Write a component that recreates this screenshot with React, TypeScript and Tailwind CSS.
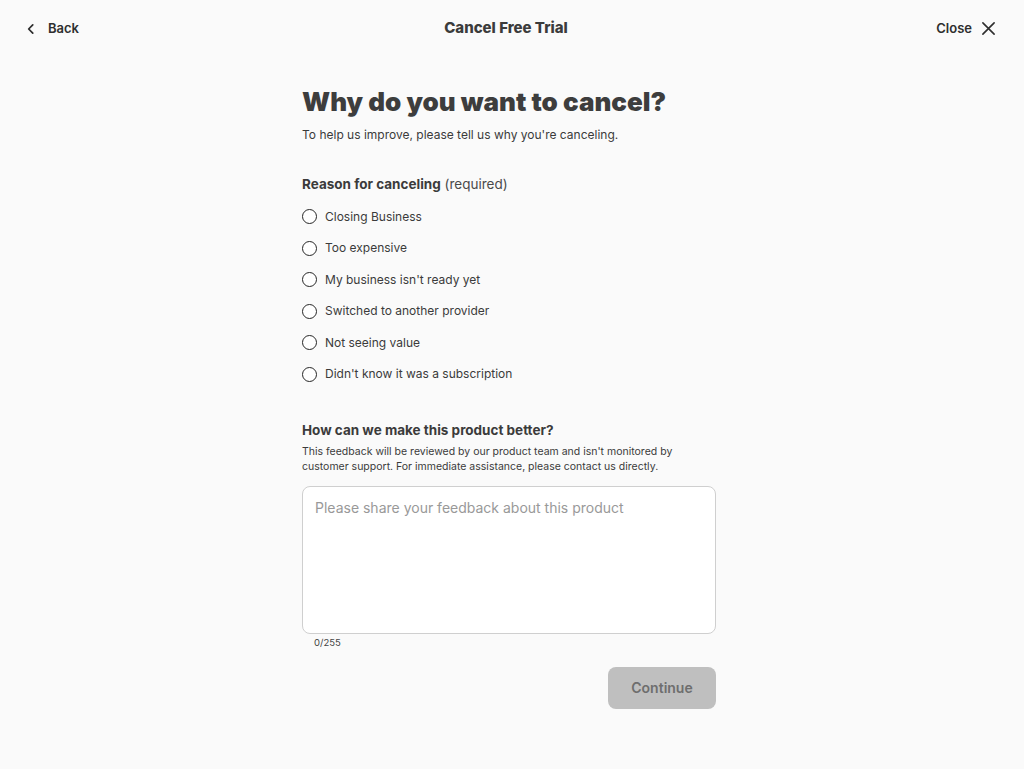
import React from "react";

const reasons = [
  "Closing Business",
  "Too expensive",
  "My business isn't ready yet",
  "Switched to another provider",
  "Not seeing value",
  "Didn't know it was a subscription",
];

export default function App() {
  return (
    <div className="min-h-[769px] w-full bg-[#fafafa] text-[#3b3b3b]" style={{ fontFamily: "Inter, 'Noto Sans', sans-serif" }}>
      <header className="grid h-[57px] grid-cols-[1fr_auto_1fr] items-center pl-[24px] pr-[28px]">
        <div className="flex">
          <button className="flex items-center gap-[10px] text-[13px] font-semibold text-[#2e2e2e]">
            <svg width="14" height="14" viewBox="0 0 24 24" fill="none" stroke="#2e2e2e" strokeWidth="3" strokeLinecap="round" strokeLinejoin="round">
              <path d="M15 5l-7 7 7 7" />
            </svg>
            Back
          </button>
        </div>
        <h1 className="mr-[8px] text-[15px] font-extrabold text-[#3b3b3b]">Cancel Free Trial</h1>
        <div className="flex justify-end">
          <button className="flex items-center gap-[9px] text-[13px] font-semibold text-[#2e2e2e]">
            Close
            <svg width="15" height="15" viewBox="0 0 16 16" fill="none" stroke="#2e2e2e" strokeWidth="1.7" strokeLinecap="round">
              <path d="M2 2l12 12M14 2L2 14" />
            </svg>
          </button>
        </div>
      </header>

      <main className="mx-auto w-[420px] pr-[6px] pt-[29px]">
        <h2 className="text-[26px] font-black leading-[32px] text-[#3d3d3d]">Why do you want to cancel?</h2>
        <p className="mt-[9px] text-[12px] leading-[16px] text-[#3b3b3b]">To help us improve, please tell us why you're canceling.</p>

        <div className="mt-[32px] text-[13.5px] leading-[18px]">
          <span className="font-bold">Reason for canceling</span> <span className="text-[#4a4a4a]">(required)</span>
        </div>

        <div className="mt-[8px] flex flex-col">
          {reasons.map((r) => (
            <label key={r} className="flex h-[31.5px] items-center gap-[8px] text-[12px] text-[#3b3b3b]">
              <span className="h-[15px] w-[15px] rounded-full border-[1.75px] border-[#262626] bg-white" />
              {r}
            </label>
          ))}
        </div>

        <div className="mt-[30.5px] text-[13.5px] font-bold leading-[18px]">How can we make this product better?</div>
        <p className="mt-[5px] text-[10.5px] leading-[15px] text-[#3b3b3b]">
          This feedback will be reviewed by our product team and isn't monitored by customer support. For immediate assistance, please contact us directly.
        </p>

        <div className="mt-[12px] h-[148px] rounded-lg border border-[#cfcfcf] bg-white px-[12px] py-[12px] text-[14px] leading-[18px] text-[#999]">
          Please share your feedback about this product
        </div>
        <div className="ml-[12px] mt-[2px] text-[9.5px] text-[#444]">0/255</div>

        <div className="mt-[17px] flex justify-end">
          <button className="h-[42px] w-[108px] rounded-lg bg-[#bfbfbf] text-[14px] font-semibold text-[#6e6e6e]">Continue</button>
        </div>
      </main>
    </div>
  );
}
